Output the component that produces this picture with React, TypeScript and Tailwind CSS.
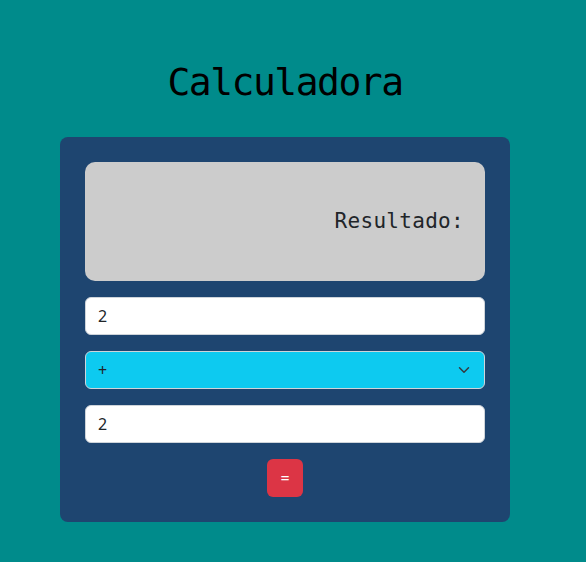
export default function App() {
  return (
    <div className="min-h-[562px] w-full bg-[#008b8b]">
      <div className="flex w-[570px] flex-col items-center pt-[58px]">
        <h1 className="text-[38px] leading-[48px] tracking-[-1.5px] text-black [font-family:'DejaVu_Sans_Mono',monospace]">
          Calculadora
        </h1>
        <div className="mt-[31px] flex w-[450px] flex-col gap-4 rounded-lg bg-[#1e4570] p-[25px]">
          <div className="flex h-[119px] items-center justify-end rounded-[10px] bg-[#cccccc] pr-[21px]">
            <span className="text-[21px] tracking-[0.3px] text-[#212529] [font-family:'DejaVu_Sans_Mono',monospace]">
              Resultado:
            </span>
          </div>
          <input
            defaultValue="2"
            className="h-[38px] rounded-md border border-[#ced4da] bg-white px-3 text-base text-[#212529] outline-none [font-family:'Noto_Sans',sans-serif]"
          />
          <div className="relative">
            <select
              defaultValue="+"
              className="h-[38px] w-full appearance-none rounded-md border border-[#ced4da] bg-[#0dcaf0] px-3 text-base text-[#212529] outline-none [font-family:'Noto_Sans',sans-serif]"
            >
              <option value="+">+</option>
              <option value="-">-</option>
              <option value="*">*</option>
              <option value="/">/</option>
            </select>
            <svg
              className="pointer-events-none absolute right-[13px] top-[13px]"
              width="16"
              height="12"
              viewBox="0 0 16 16"
              fill="none"
              stroke="#343a40"
              strokeWidth="2"
              strokeLinecap="round"
              strokeLinejoin="round"
            >
              <path d="M2 5l6 6 6-6" />
            </svg>
          </div>
          <input
            defaultValue="2"
            className="h-[38px] rounded-md border border-[#ced4da] bg-white px-3 text-base text-[#212529] outline-none [font-family:'Noto_Sans',sans-serif]"
          />
          <div className="flex justify-center">
            <button className="h-[38px] w-[36px] rounded-md bg-[#dc3545] text-base text-white [font-family:'Noto_Sans',sans-serif]">
              =
            </button>
          </div>
        </div>
      </div>
    </div>
  );
}
